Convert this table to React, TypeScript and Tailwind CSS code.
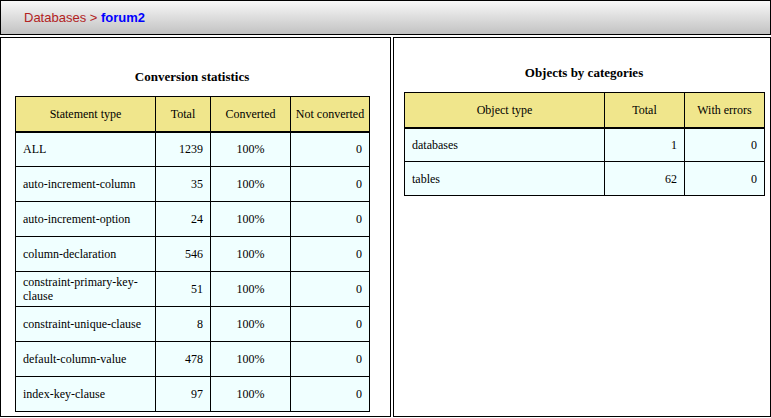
import React from 'react';

interface StatRow {
    type: string;
    total: number;
    converted: string;
    notConverted: number;
}

const stats: StatRow[] = [
    { type: 'ALL', total: 1239, converted: '100%', notConverted: 0 },
    { type: 'auto-increment-column', total: 35, converted: '100%', notConverted: 0 },
    { type: 'auto-increment-option', total: 24, converted: '100%', notConverted: 0 },
    { type: 'column-declaration', total: 546, converted: '100%', notConverted: 0 },
    { type: 'constraint-primary-key-clause', total: 51, converted: '100%', notConverted: 0 },
    { type: 'constraint-unique-clause', total: 8, converted: '100%', notConverted: 0 },
    { type: 'default-column-value', total: 478, converted: '100%', notConverted: 0 },
    { type: 'index-key-clause', total: 97, converted: '100%', notConverted: 0 },
];

const objects = [
    { type: 'databases', total: 1, errors: 0 },
    { type: 'tables', total: 62, errors: 0 },
];

const th = 'border border-black border-b-2 bg-[#f0e68c] font-normal text-center px-[2px]';
const td = 'border border-black px-[7px]';

const App: React.FC = () => {
    return (
        <div className="w-[771px] h-[418px] bg-white text-black [font-family:'Liberation_Serif',serif] text-[12px] leading-[14px]">
            {/* breadcrumb bar */}
            <div className="h-[35px] border border-black bg-[linear-gradient(#f8f8f8,#c2c2c2)] flex items-center pl-[23px] [font-family:'Liberation_Sans',sans-serif] text-[13px]">
                <span className="text-[#b22222]">Databases &gt;&nbsp;</span>
                <span className="text-[#0000ff] font-bold">forum2</span>
            </div>

            <div className="flex gap-[2px] mt-[2px] h-[380px]">
                {/* conversion statistics */}
                <div className="w-[391px] border border-black pt-[31px] pl-[14px]">
                    <div className="w-[354px]">
                        <div className="text-center font-bold text-[13px] leading-[15px] mb-[12px]">Conversion statistics</div>
                        <table className="border-collapse w-[354px] table-fixed">
                            <colgroup>
                                <col className="w-[140px]" />
                                <col className="w-[55px]" />
                                <col className="w-[80px]" />
                                <col className="w-[79px]" />
                            </colgroup>
                            <thead>
                                <tr className="h-[35px]">
                                    <th className={th}>Statement type</th>
                                    <th className={th}>Total</th>
                                    <th className={th}>Converted</th>
                                    <th className={th}>Not converted</th>
                                </tr>
                            </thead>
                            <tbody>
                                {stats.map(row => (
                                    <tr key={row.type} className="h-[35px] bg-[#f0ffff]">
                                        <td className={td}>{row.type}</td>
                                        <td className={td + ' text-right'}>{row.total}</td>
                                        <td className={td + ' text-center'}>{row.converted}</td>
                                        <td className={td + ' text-right'}>{row.notConverted}</td>
                                    </tr>
                                ))}
                            </tbody>
                        </table>
                    </div>
                </div>

                {/* objects by categories */}
                <div className="flex-1 border border-black pt-[27px] pl-[10px]">
                    <div className="w-[360px]">
                        <div className="text-center font-bold text-[13px] leading-[15px] mb-[12px]">Objects by categories</div>
                        <table className="border-collapse w-[360px] table-fixed">
                            <colgroup>
                                <col className="w-[200px]" />
                                <col className="w-[80px]" />
                                <col className="w-[80px]" />
                            </colgroup>
                            <thead>
                                <tr className="h-[35px]">
                                    <th className={th}>Object type</th>
                                    <th className={th}>Total</th>
                                    <th className={th}>With errors</th>
                                </tr>
                            </thead>
                            <tbody>
                                {objects.map(o => (
                                    <tr key={o.type} className="h-[34px] bg-[#f0ffff]">
                                        <td className={td}>{o.type}</td>
                                        <td className={td + ' text-right'}>{o.total}</td>
                                        <td className={td + ' text-right'}>{o.errors}</td>
                                    </tr>
                                ))}
                            </tbody>
                        </table>
                    </div>
                </div>
            </div>
        </div>
    );
};

export default App;
